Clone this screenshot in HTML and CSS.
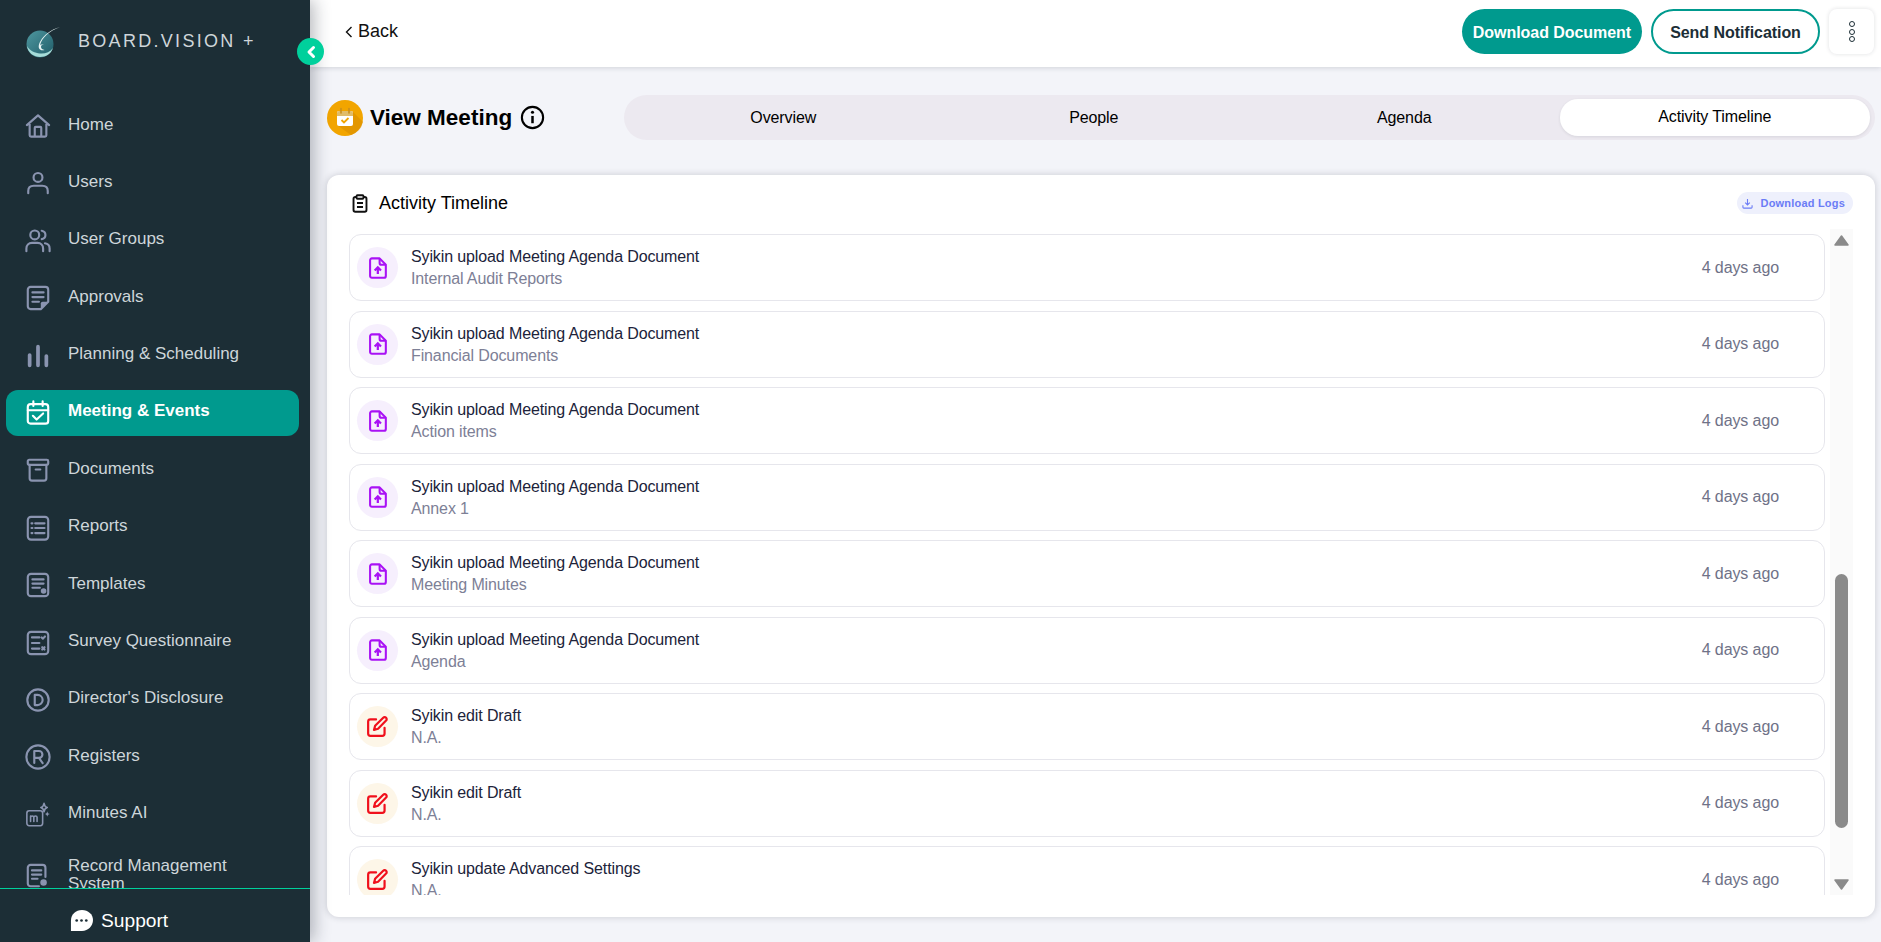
FILE: index.html
```html
<!DOCTYPE html>
<html lang="en">
<head>
<meta charset="utf-8">
<title>View Meeting</title>
<link rel="stylesheet" href="styles.css">
</head>
<body>
<svg class="sprite" width="0" height="0" aria-hidden="true">
  <symbol id="i-upload" viewBox="0 0 20 24"><path d="M3.200 1.300h8.600l6.900 7.100v12.400a2 2 0 0 1-2 2H3.200a2 2 0 0 1-2-2V3.300a2 2 0 0 1 2-2z" fill="none" stroke="currentColor" stroke-width="2.300" stroke-linejoin="round"/><path d="M11.800 1.600v4.800a2 2 0 0 0 2 2h4.600" fill="none" stroke="currentColor" stroke-width="2.300"/><path d="M9.800 18.800v-7M6.300 14.700l3.500-3.500 3.500 3.500" fill="none" stroke="currentColor" stroke-width="2.500"/></symbol>
  <symbol id="i-edit" viewBox="0 0 22 22"><path d="M9.500 3.600H3.600a2.400 2.400 0 0 0-2.400 2.400v12.400a2.400 2.400 0 0 0 2.400 2.400H16a2.400 2.400 0 0 0 2.400-2.400v-6" fill="none" stroke="currentColor" stroke-width="2.300" stroke-linecap="round"/><path d="M17 1.800a2.100 2.100 0 0 1 3 3L11.600 13.400l-4.300 1.200 1.200-4.300z" fill="none" stroke="currentColor" stroke-width="2.300" stroke-linejoin="round"/></symbol>
</svg>
<div class="app">
  <aside class="sidebar">
    <div class="brand">
      <svg class="logo" viewBox="0 0 36 32"><defs><linearGradient id="lg" x1="0" y1="0" x2="1" y2="1"><stop offset="0" stop-color="#4f98a0"/><stop offset="1" stop-color="#1f5c68"/></linearGradient></defs><circle cx="15" cy="18" r="13.500" fill="url(#lg)"/><path d="M2 20c1 7 7 11 13 11 6 0 11-3 13-9-3 4-8 6-13 5.500-5-.5-10-2.500-13-7.500z" fill="#a6dcd8"/><path d="M35 1C25 4 19 9 15.500 15c-2 3.500-2.500 7-.5 8.500 1.500 1 3.500 1 4.500.5-2-.5-3.500-1.500-3.500-3 0-1.500 1.500-2.500 2.500-2-1.500-1-3-.5-3.500.5C16.500 12 24 5 35 1z" fill="#e6f3f3"/></svg>
      <span class="brand-name">BOARD.VISION +</span>
    </div>
    <button class="collapse" aria-label="Collapse"><svg viewBox="0 0 12 14" width="12" height="14"><path d="M8.500 2.500 4 7l4.500 4.500" fill="none" stroke="#fff" stroke-width="3" stroke-linecap="round" stroke-linejoin="round"/></svg></button>
    <nav class="nav">
      <a class="nav-item"><svg class="nav-icon" viewBox="0 0 28 28"><path d="M2 13 14 2.500 26 13M5 10.500V24a1.500 1.500 0 0 0 1.500 1.500h15A1.500 1.500 0 0 0 23 24V10.500M10.500 25.500V16a1 1 0 0 1 1-1h5a1 1 0 0 1 1 1v9.500"/></svg><span>Home</span></a>
      <a class="nav-item"><svg class="nav-icon" viewBox="0 0 28 28"><circle cx="14" cy="8" r="4.800"/><path d="M3.500 25v-2.500c0-3.500 2.500-5.500 6-5.500h9c3.500 0 6 2 6 5.500V25"/></svg><span>Users</span></a>
      <a class="nav-item"><svg class="nav-icon" viewBox="0 0 28 28"><circle cx="10.500" cy="7.500" r="4.800"/><path d="M1.500 25v-3c0-3.500 2.500-6 6-6h6c3.500 0 6 2.500 6 6v3M18 3c2.600.5 4 2.500 4 4.500s-1.400 4-4 4.500M21.500 16.500c3 .5 5 2.500 5 5.500v3"/></svg><span>User Groups</span></a>
      <a class="nav-item"><svg class="nav-icon" viewBox="0 0 28 28"><path d="M17 26H6a3 3 0 0 1-3-3V5a3 3 0 0 1 3-3h16a3 3 0 0 1 3 3v13z"/><path d="M8 8h12M8 13h12M8 18h7"/><path class="solid" d="M17 26v-6a2 2 0 0 1 2-2h6z"/></svg><span>Approvals</span></a>
      <a class="nav-item"><svg class="nav-icon bars" viewBox="0 0 28 28"><path d="M5 13v11M14 4v20M23 14v10"/></svg><span>Planning &amp; Scheduling</span></a>
      <a class="nav-item active"><svg class="nav-icon" viewBox="0 0 28 28"><rect x="3" y="4.500" width="22" height="21" rx="3"/><path d="M3 11h22M9 1.500v5M19 1.500v5M8.500 17l4 4 7-6.500"/></svg><span>Meeting &amp; Events</span></a>
      <a class="nav-item"><svg class="nav-icon" viewBox="0 0 28 28"><rect x="3" y="3" width="22" height="5.500" rx="1.500"/><path d="M5 8.500V23a2.500 2.500 0 0 0 2.500 2.500h13A2.500 2.500 0 0 0 23 23V8.500M11.500 13.500h5"/></svg><span>Documents</span></a>
      <a class="nav-item"><svg class="nav-icon" viewBox="0 0 28 28"><rect x="3" y="2" width="22" height="24.500" rx="3.500"/><path d="M11 9h10M11 14h10M11 19.500h10M7 9h1M7 14h1M7 19.500h1"/></svg><span>Reports</span></a>
      <a class="nav-item"><svg class="nav-icon" viewBox="0 0 28 28"><rect x="3" y="2" width="22" height="24" rx="3.500"/><path d="M8 8h12M8 12.500h12M8 17h8"/><circle class="solid" cx="20" cy="20.500" r="3"/></svg><span>Templates</span></a>
      <a class="nav-item"><svg class="nav-icon" viewBox="0 0 28 28"><rect x="3" y="2" width="22" height="24" rx="3.500"/><path d="M7.500 8h8M7.500 14h8M7.500 20h8M18 8l1.300 1.300L21.500 7M18.500 18.500l2.500 2.500M21 18.500l-2.500 2.500"/></svg><span>Survey Questionnaire</span></a>
      <a class="nav-item"><svg class="nav-icon" viewBox="0 0 28 28"><circle cx="14" cy="14" r="11.500"/><path d="M10.500 8.500v11h3a5.500 5.500 0 0 0 0-11z"/></svg><span>Director's Disclosure</span></a>
      <a class="nav-item"><svg class="nav-icon" viewBox="0 0 28 28"><circle cx="14" cy="14" r="12.500"/><path d="M10 20.500v-13h5a3.700 3.700 0 0 1 0 7.500h-5M15 15l4 5.500"/></svg><span>Registers</span></a>
      <a class="nav-item"><svg class="nav-icon thin" viewBox="0 0 28 28"><rect x="2" y="9.500" width="17" height="16" rx="2.500"/><path d="M6 21v-6M6 16.500c0-2 3.500-2 3.500 0V21M9.500 16.500c0-2 3.500-2 3.500 0V21M20.500 1.500c.5 3 1.500 4 3.500 4.500-2 .5-3 1.500-3.500 4.500-.5-3-1.500-4-3.500-4.500 2-.5 3-1.500 3.500-4.500z"/><path class="solid" d="M24 10c.3 1.800 1 2.600 3 3-2 .4-2.700 1.200-3 3-.3-1.800-1-2.600-3-3 2-.4 2.700-1.200 3-3z"/></svg><span>Minutes AI</span></a>
      <a class="nav-item record"><svg class="nav-icon" viewBox="0 0 28 28"><path d="M15 25H6a3 3 0 0 1-3-3V5a3 3 0 0 1 3-3h13a3 3 0 0 1 3 3v10"/><path d="M7.500 8h10M7.500 12.500h10M7.500 17h6"/><circle class="solid" cx="20" cy="21" r="3.500"/></svg><span>Record Management System</span></a>
    </nav>
    <div class="support"><svg viewBox="0 0 24 24" width="23" height="23"><path d="M12.500 1C19 1 24 5.500 24 11.500S19 23 12.500 23H1v-11C1 5.500 6 1 12.500 1z" fill="#fff"/><circle cx="7" cy="12" r="1.400" fill="#1c2e36"/><circle cx="12" cy="12" r="1.400" fill="#1c2e36"/><circle cx="17" cy="12" r="1.400" fill="#1c2e36"/></svg><span>Support</span></div>
  </aside>
  <main class="main">
    <header class="topbar">
      <a class="back"><svg viewBox="0 0 8 14" width="8" height="14"><path d="M6.500 2 1.500 7l5 5" fill="none" stroke="#111" stroke-width="1.400"/></svg><span>Back</span></a>
      <div class="actions">
        <button class="btn btn-fill">Download Document</button>
        <button class="btn btn-line">Send Notification</button>
        <button class="kebab" aria-label="More"><i></i><i></i><i></i></button>
      </div>
    </header>
    <div class="content">
      <div class="title-row">
        <div class="title">
          <svg class="title-icon" viewBox="0 0 36 36"><circle cx="18" cy="18" r="18" fill="#f2a500"/><path d="M10 12h16l10 10a18 18 0 0 1-12 13L10 25z" fill="#d98e00" opacity=".6"/><rect x="10" y="11" width="16" height="15" rx="2" fill="#fff"/><path d="M10 13a2 2 0 0 1 2-2h12a2 2 0 0 1 2 2v3H10z" fill="#e0bc6a"/><path d="M14 8.500v4.500M22 8.500v4.500" stroke="#c98f1d" stroke-width="1.600" stroke-linecap="round"/><path d="M14.500 20l2.500 2.500 4.500-4.500" fill="none" stroke="#f2a500" stroke-width="1.800"/></svg>
          <h1>View Meeting</h1>
          <svg class="info" viewBox="0 0 24 24"><circle cx="12" cy="12" r="10.200" fill="none" stroke="#000" stroke-width="2"/><path d="M12 10.500v7" stroke="#000" stroke-width="2.400"/><circle cx="12" cy="7" r="1.500"/></svg>
        </div>
        <div class="tabs">
          <span class="tab">Overview</span>
          <span class="tab">People</span>
          <span class="tab">Agenda</span>
          <span class="tab on">Activity Timeline</span>
        </div>
      </div>
      <section class="card">
        <div class="card-head">
          <div class="card-title">
            <svg viewBox="0 0 18 22" width="16" height="19"><path d="M5 3.500H3.500a2 2 0 0 0-2 2v13a2 2 0 0 0 2 2h11a2 2 0 0 0 2-2v-13a2 2 0 0 0-2-2H13" fill="none" stroke="#111" stroke-width="2.200"/><rect x="5" y="1.500" width="8" height="4" rx="1" fill="none" stroke="#111" stroke-width="2.200"/><path d="M5.500 10.500h7M5.500 15h7" stroke="#111" stroke-width="2.200"/></svg>
            <span>Activity Timeline</span>
          </div>
          <button class="logs"><svg viewBox="0 0 12 12" width="11" height="11"><path d="M6 1v6.500M3.500 5 6 7.500 8.500 5M1 8v2a1 1 0 0 0 1 1h8a1 1 0 0 0 1-1V8" fill="none" stroke="#6b7cf6" stroke-width="1.200"/></svg><span>Download Logs</span></button>
        </div>
        <div class="list-wrap">
          <div class="list">
            <div class="row"><span class="badge up"><svg><use href="#i-upload"/></svg></span><div class="txt"><b>Syikin upload Meeting Agenda Document</b><small>Internal Audit Reports</small></div><time>4 days ago</time></div>
            <div class="row"><span class="badge up"><svg><use href="#i-upload"/></svg></span><div class="txt"><b>Syikin upload Meeting Agenda Document</b><small>Financial Documents</small></div><time>4 days ago</time></div>
            <div class="row"><span class="badge up"><svg><use href="#i-upload"/></svg></span><div class="txt"><b>Syikin upload Meeting Agenda Document</b><small>Action items</small></div><time>4 days ago</time></div>
            <div class="row"><span class="badge up"><svg><use href="#i-upload"/></svg></span><div class="txt"><b>Syikin upload Meeting Agenda Document</b><small>Annex 1</small></div><time>4 days ago</time></div>
            <div class="row"><span class="badge up"><svg><use href="#i-upload"/></svg></span><div class="txt"><b>Syikin upload Meeting Agenda Document</b><small>Meeting Minutes</small></div><time>4 days ago</time></div>
            <div class="row"><span class="badge up"><svg><use href="#i-upload"/></svg></span><div class="txt"><b>Syikin upload Meeting Agenda Document</b><small>Agenda</small></div><time>4 days ago</time></div>
            <div class="row"><span class="badge ed"><svg><use href="#i-edit"/></svg></span><div class="txt"><b>Syikin edit Draft</b><small>N.A.</small></div><time>4 days ago</time></div>
            <div class="row"><span class="badge ed"><svg><use href="#i-edit"/></svg></span><div class="txt"><b>Syikin edit Draft</b><small>N.A.</small></div><time>4 days ago</time></div>
            <div class="row"><span class="badge ed"><svg><use href="#i-edit"/></svg></span><div class="txt"><b>Syikin update Advanced Settings</b><small>N.A.</small></div><time>4 days ago</time></div>
          </div>
          <div class="scroll">
            <svg class="arrow" viewBox="0 0 15 11"><path d="M7.500 1 14 10H1z" fill="#8a8a8a" stroke="#8a8a8a" stroke-width="1.500" stroke-linejoin="round"/></svg>
            <span class="thumb"></span>
            <svg class="arrow down" viewBox="0 0 15 11"><path d="M1 1h13L7.500 10z" fill="#8a8a8a" stroke="#8a8a8a" stroke-width="1.500" stroke-linejoin="round"/></svg>
          </div>
        </div>
      </section>
    </div>
  </main>
</div>
</body>
</html>
```
FILE: styles.css
```css
* { box-sizing: border-box; }
html, body { margin: 0; height: 100%; overflow: hidden; }
body { font-family: "Liberation Sans", Arial, sans-serif; background: #f3f4f9; color: #111; }
.sprite { position: absolute; }
.app { display: flex; height: 942px; }

.sidebar { position: relative; z-index: 3; flex: 0 0 310px; display: flex; flex-direction: column; background: #1c2e36; box-shadow: 4px 0 16px rgba(30, 36, 50, .32); }
.brand { flex: 0 0 103px; display: flex; align-items: flex-start; padding: 26px 0 0 25px; }
.logo { width: 36px; height: 32px; }
.brand-name { margin: 5px 0 0 17px; color: #cfd6da; font-size: 18px; letter-spacing: 2.300px; white-space: nowrap; }
.collapse { position: absolute; top: 38px; left: 297px; width: 27px; height: 27px; padding: 0; display: flex; align-items: center; justify-content: center; border: 0; border-radius: 50%; background: #00d09c; }

.nav { flex: 1; overflow: hidden; padding: 0 11px 0 6px; display: flex; flex-direction: column; gap: 11.400px; }
.nav-item { flex: 0 0 46px; display: flex; align-items: center; gap: 17px; padding-left: 19px; border-radius: 12px; color: #ced6da; font-size: 17px; line-height: 18px; }
.nav-item span { padding-bottom: 3px; }
.nav-item.active { background: #009a8e; color: #fff; font-weight: 700; }
.nav-item.active .nav-icon { stroke: #fff; }
.nav-icon { flex: none; width: 26px; height: 26px; fill: none; stroke: #8a94b0; stroke-width: 2.300; stroke-linecap: round; stroke-linejoin: round; }
.nav-icon.bars { stroke-width: 4; }
.nav-icon.thin { stroke-width: 1.700; }
.nav-icon .solid { fill: #8a94b0; stroke: none; }
.record { margin-top: 4px; }
.record span { width: 200px; }

.support { flex: 0 0 54px; display: flex; align-items: center; gap: 8px; padding: 10px 0 0 70px; border-top: 1px solid #00d09c; color: #fff; font-size: 19.200px; }

.main { flex: 1; min-width: 0; display: flex; flex-direction: column; }
.topbar { position: relative; z-index: 2; flex: 0 0 67px; display: flex; align-items: center; justify-content: space-between; padding: 0 7px 0 35px; background: #fff; box-shadow: 0 1px 5px rgba(30, 36, 50, .16); }
.back { display: flex; align-items: center; gap: 5px; font-size: 18px; margin-top: -4px; }
.actions { display: flex; align-items: center; gap: 9px; margin-top: -4px; }
.btn { height: 45px; border-radius: 23px; font: 700 16px "Liberation Sans", Arial, sans-serif; padding: 2px 0 0; }
.btn-fill { width: 180px; border: 0; background: #009a8e; color: #fff; letter-spacing: -.05px; }
.btn-line { width: 169px; border: 2px solid #009a8e; background: #fff; color: #1c2e36; letter-spacing: -.05px; }
.kebab { width: 45px; height: 45px; display: flex; flex-direction: column; align-items: center; justify-content: center; gap: 1.500px; padding: 0; border: 0; border-radius: 8px; background: #fff; box-shadow: 0 0 4px rgba(30, 36, 50, .14); }
.kebab i { width: 6px; height: 6px; border: 1.700px solid #1c2e36; border-radius: 50%; }

.content { flex: 1; display: flex; flex-direction: column; padding: 28px 6px 25px 17px; min-height: 0; }
.title-row { flex: 0 0 45px; display: flex; align-items: center; }
.title { flex: 0 0 297px; display: flex; align-items: center; }
.title-icon { width: 36px; height: 36px; }
.title h1 { margin: 0 8px 0 7px; font-size: 22.500px; line-height: 26px; font-weight: 700; color: #000; }
.info { width: 25px; height: 25px; }
.tabs { flex: 1; height: 45px; display: flex; align-items: center; padding: 0 5px 0 4px; border-radius: 23px; background: #ece9f0; }
.tab { flex: 1; text-align: center; font-size: 16px; letter-spacing: -.1px; color: #000; line-height: 36px; border-radius: 18px; }
.tab.on { height: 37px; background: #fff; box-shadow: 0 1px 3px rgba(30, 36, 50, .1); }

.card { flex: 1; min-height: 0; margin-top: 35px; display: flex; flex-direction: column; padding: 0 22px 22px 22px; border-radius: 12px; background: #fff; box-shadow: 0 0 7px rgba(30, 36, 50, .2); }
.card-head { flex: 0 0 54px; display: flex; align-items: flex-start; justify-content: space-between; padding-top: 17px; }
.card-title { display: flex; align-items: center; gap: 11px; font-size: 18px; line-height: 22px; color: #000; padding-left: 3px; }
.logs { height: 22px; display: flex; align-items: center; gap: 8px; padding: 0 8px 0 5px; border: 0; border-radius: 11px; background: #eef0fc; color: #6b7cf6; font: 700 11px "Liberation Sans", Arial, sans-serif; letter-spacing: .2px; }

.list-wrap { flex: 1; min-height: 0; display: flex; gap: 5px; }
.list { flex: 1; min-width: 0; overflow: hidden; display: flex; flex-direction: column; gap: 9.500px; padding-top: 5px; }
.row { flex: 0 0 67px; display: flex; align-items: center; padding: 0 45px 0 7px; border: 1px solid #e6e6ec; border-radius: 12px; }
.badge { flex: 0 0 41px; height: 41px; margin-right: 13px; display: flex; align-items: center; justify-content: center; border-radius: 50%; }
.badge svg { display: block; }
.badge.up { background: #f6effd; color: #a912f5; }
.badge.up svg { width: 18px; height: 22px; }
.badge.ed { background: #fdf6e8; color: #f0101c; }
.badge.ed svg { width: 21px; height: 21px; }
.txt { flex: 1; display: flex; flex-direction: column; gap: 3px; letter-spacing: -.12px; }
.txt b { font-weight: 400; font-size: 16px; line-height: 19px; color: #20233a; }
.txt small { font-size: 16px; line-height: 19px; color: #7d8096; }
time { font-size: 16px; letter-spacing: -.1px; color: #6f7287; }

.scroll { flex: 0 0 23px; display: flex; flex-direction: column; align-items: center; background: #fafafa; padding-top: 6px; }
.arrow { flex: none; width: 15px; height: 11px; }
.arrow.down { margin-top: 51px; }
.thumb { flex: none; width: 13px; height: 254px; margin-top: 328px; border-radius: 7px; background: #8a8a8a; }
```
